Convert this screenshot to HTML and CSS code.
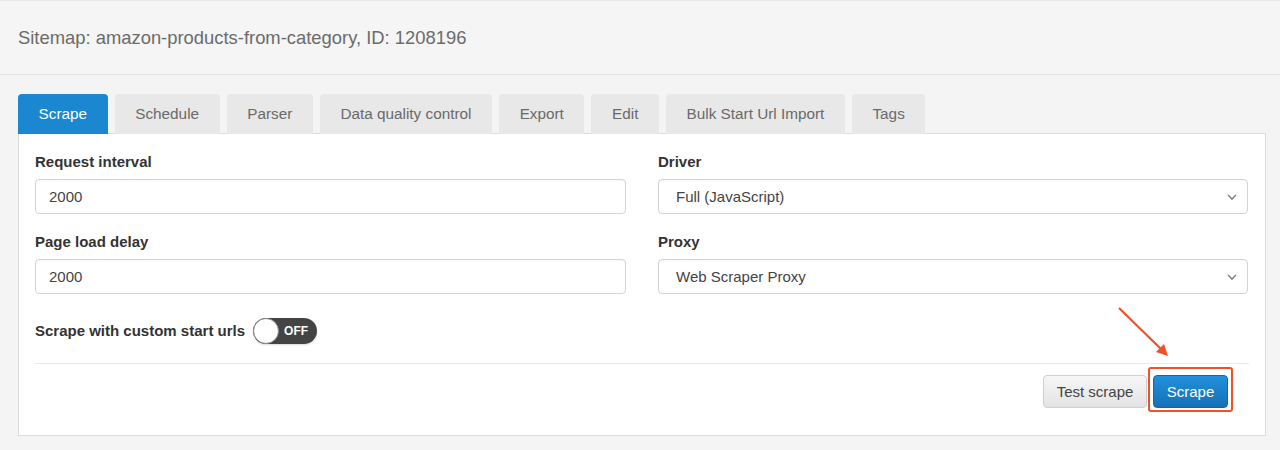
FILE: index.html
```html
<!DOCTYPE html>
<html>
<head>
<meta charset="utf-8">
<link rel="stylesheet" href="styles.css">
</head>
<body>
<div class="header">
  <h1 class="title">Sitemap: amazon-products-from-category, ID: 1208196</h1>
</div>
<div class="content">
  <ul class="tabs">
    <li class="tab active">Scrape</li>
    <li class="tab">Schedule</li>
    <li class="tab">Parser</li>
    <li class="tab">Data quality control</li>
    <li class="tab">Export</li>
    <li class="tab">Edit</li>
    <li class="tab">Bulk Start Url Import</li>
    <li class="tab">Tags</li>
  </ul>
  <div class="panel">
    <div class="form-grid">
      <div class="field">
        <label class="label">Request interval</label>
        <div class="control">2000</div>
      </div>
      <div class="field">
        <label class="label">Driver</label>
        <div class="control select">Full (JavaScript)
          <svg class="chevron" width="10" height="6" viewBox="0 0 10 6"><polyline points="1,1 5,5 9,1" fill="none" stroke="#777" stroke-width="1.3"/></svg>
        </div>
      </div>
      <div class="field">
        <label class="label">Page load delay</label>
        <div class="control">2000</div>
      </div>
      <div class="field">
        <label class="label">Proxy</label>
        <div class="control select">Web Scraper Proxy
          <svg class="chevron" width="10" height="6" viewBox="0 0 10 6"><polyline points="1,1 5,5 9,1" fill="none" stroke="#777" stroke-width="1.3"/></svg>
        </div>
      </div>
    </div>
    <div class="toggle-row">
      <span class="label">Scrape with custom start urls</span>
      <span class="toggle"><span class="knob"></span><span class="toggle-text">OFF</span></span>
    </div>
    <div class="actions">
      <button class="btn btn-default">Test scrape</button>
      <span class="highlight"><button class="btn btn-primary">Scrape</button></span>
    </div>
  </div>
</div>
<svg class="arrow" width="70" height="70" viewBox="0 0 70 70">
  <line x1="9" y1="8" x2="52" y2="50" stroke="#f0502a" stroke-width="2.2"/>
  <polygon points="58,56 46,52 54,44" fill="#f0502a"/>
</svg>
</body>
</html>
```
FILE: styles.css
```css
html, body {
  margin: 0;
  padding: 0;
}
body {
  background: #f4f4f4;
  font-family: "Liberation Sans", Arial, sans-serif;
  color: #333;
  height: 450px;
  overflow: hidden;
  position: relative;
}
.header {
  height: 73px;
  border-top: 1px solid #e9e9e9;
  border-bottom: 1px solid #e2e2e2;
  background: #f5f5f5;
  display: flex;
  align-items: center;
  padding-left: 18px;
}
.title {
  margin: 0;
  font-size: 18.4px;
  font-weight: normal;
  color: #6b6b6b;
}
.content {
  padding: 19px 14px 0 18px;
}
.tabs {
  list-style: none;
  margin: 0;
  padding: 0;
  display: flex;
  gap: 7px;
  position: relative;
  z-index: 1;
  margin-bottom: -1px;
}
.tab {
  height: 40px;
  line-height: 40px;
  padding: 0 20.6px;
  background: #e8e8e8;
  color: #6a6a6a;
  font-size: 15.3px;
  border-radius: 4px 4px 0 0;
}
.tab.active {
  background: #1a87d0;
  color: #fff;
}
.panel {
  background: #fff;
  border: 1px solid #dcdcdc;
  padding: 18px 16px 27px 16px;
}
.form-grid {
  display: grid;
  grid-template-columns: 591px 590px;
  column-gap: 32px;
  row-gap: 18px;
}
.field {
  display: flex;
  flex-direction: column;
}
.label {
  font-size: 15px;
  font-weight: bold;
  color: #333;
  line-height: 20px;
}
.field .label {
  margin-bottom: 7px;
}
.control {
  height: 35px;
  box-sizing: border-box;
  border: 1px solid #d4d4d4;
  border-radius: 4px;
  padding: 0 13px;
  font-size: 15px;
  color: #444;
  display: flex;
  align-items: center;
  box-shadow: inset 0 1px 1px rgba(0,0,0,0.04);
}
.select {
  padding-left: 17px;
  justify-content: space-between;
}
.chevron {
  margin-right: -3px;
}
.toggle-row {
  display: flex;
  align-items: center;
  gap: 8px;
  margin-top: 24px;
  padding-bottom: 19px;
  border-bottom: 1px solid #eaeaea;
}
.toggle {
  width: 64px;
  height: 26px;
  border-radius: 13px;
  background: #444;
  display: flex;
  align-items: center;
  position: relative;
  box-shadow: 0 1px 2px rgba(0,0,0,0.15);
}
.knob {
  width: 24px;
  height: 24px;
  border-radius: 50%;
  background: #fff;
  border: 1px solid #888;
  flex: none;
}
.toggle-text {
  flex: 1;
  text-align: center;
  color: #fff;
  font-size: 12px;
  font-weight: bold;
  padding-right: 4px;
}
.actions {
  display: flex;
  justify-content: flex-end;
  align-items: center;
  gap: 6px;
  padding-top: 11px;
  padding-right: 21px;
}
.btn {
  height: 33px;
  font-family: "Liberation Sans", Arial, sans-serif;
  font-size: 15px;
  border-radius: 4px;
  cursor: pointer;
  margin: 0;
}
.btn-default {
  width: 104px;
  background: linear-gradient(#f7f7f7, #e3e3e3);
  border: 1px solid #cfcfcf;
  color: #444;
}
.btn-primary {
  width: 75px;
  background: linear-gradient(#2290dc, #1471b8);
  border: 1px solid #1466a8;
  color: #fff;
  display: block;
}
.highlight {
  position: relative;
  display: block;
}
.highlight::after {
  content: "";
  position: absolute;
  left: -5px;
  right: -5px;
  top: -8px;
  bottom: -4px;
  border: 2.5px solid #f0502a;
  border-radius: 3px;
  pointer-events: none;
}
.arrow {
  position: absolute;
  left: 1110px;
  top: 300px;
}
```
